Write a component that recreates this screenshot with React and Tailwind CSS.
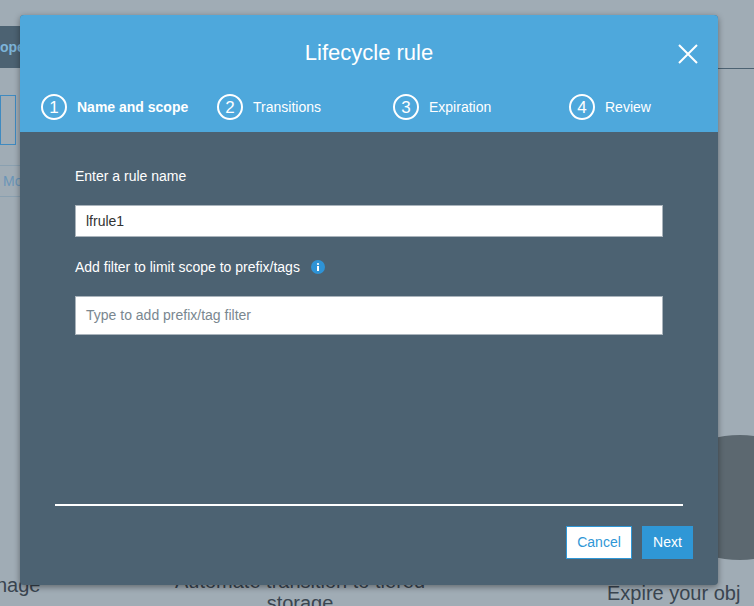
import React from "react";

const F = { fontFamily: '"Liberation Sans", Arial, sans-serif' };

function Step({ n, label, active }) {
  return (
    <div className="flex items-center gap-[10px] w-[176px] shrink-0">
      <div className="w-[26px] h-[26px] shrink-0 rounded-full border-2 border-white flex items-center justify-center text-[17px] text-white leading-none">{n}</div>
      <span className={"text-[14px] text-white whitespace-nowrap " + (active ? "font-bold" : "")}>{label}</span>
    </div>
  );
}

export default function App() {
  return (
    <div className="relative w-[754px] h-[606px] overflow-hidden bg-[#a0acb5]" style={F}>
      {/* background page fragments */}
      <div className="absolute left-0 top-[26px] w-[30px] h-[42px] bg-[#4c6272] text-[#7db4d8] font-bold text-[14px] flex items-center">ope</div>
      <div className="absolute left-[718px] top-[68px] w-[36px] h-px bg-[#4c6272]"></div>
      <div className="absolute left-0 top-[95px] w-[16px] h-[50px] border border-[#3f8ac0]"></div>
      <div className="absolute left-0 top-[165px] w-[30px] h-[32px] border-y border-[#8aa0b0] text-[#6a95b8] text-[14px] flex items-center pl-[3px]">Mo</div>
      <div className="absolute left-[700px] top-[435px] w-[80px] h-[125px] bg-[#5c6870] rounded-[40px/14px]"></div>
      <div className="absolute left-[-4px] top-[570px] text-[20px] text-[#3a4550]">nage</div>
      <div className="absolute left-[160px] top-[570px] w-[280px] text-center text-[20px] leading-[22px] text-[#3a4550]">Automate transition to tiered storage</div>
      <div className="absolute left-[607px] top-[578px] text-[20px] text-[#3a4550] whitespace-nowrap">Expire your obj</div>

      {/* modal */}
      <div className="absolute left-[20px] top-[15px] w-[698px] h-[570px] rounded-[4px] overflow-hidden shadow-[0_2px_6px_rgba(0,0,0,0.4)] bg-[#4c6272] flex flex-col">
        <div className="bg-[#4ea8dc] h-[117px] flex flex-col">
          <div className="relative h-[79px] flex items-center justify-center">
            <span className="text-white text-[22px] mt-[-4px]">Lifecycle rule</span>
            <svg className="absolute right-[20px] top-[29px]" width="20" height="20" viewBox="0 0 20 20">
              <path d="M1 1L19 19M19 1L1 19" stroke="white" strokeWidth="2" />
            </svg>
          </div>
          <div className="flex pl-[21px]">
            <Step n="1" label="Name and scope" active />
            <Step n="2" label="Transitions" />
            <Step n="3" label="Expiration" />
            <Step n="4" label="Review" />
          </div>
        </div>
        <div className="flex-1 flex flex-col px-[35px]">
          <div className="px-[20px] pt-[36px] flex flex-col">
            <div className="text-white text-[14px] leading-[16px]">Enter a rule name</div>
            <div className="mt-[21px] h-[32px] bg-white border border-[#aab4bc] flex items-center px-[10px] text-[14px] text-[#333]">lfrule1</div>
            <div className="mt-[22px] flex items-center gap-[11px]">
              <span className="text-white text-[14px] leading-[16px]">Add filter to limit scope to prefix/tags</span>
              <svg width="14" height="14" viewBox="0 0 14 14">
                <circle cx="7" cy="7" r="7" fill="#2e93d6" />
                <rect x="6" y="6" width="2" height="5" fill="white" />
                <circle cx="7" cy="4" r="1.1" fill="white" />
              </svg>
            </div>
            <div className="mt-[21px] h-[39px] bg-white border border-[#aab4bc] flex items-center px-[10px] text-[14px] text-[#7a8790]">Type to add prefix/tag filter</div>
          </div>
          <div className="mt-[169px] h-[2px] bg-white"></div>
          <div className="mt-[20px] flex justify-end gap-[10px] mr-[-10px]">
            <div className="h-[33px] w-[66px] bg-white border border-[#2f97d6] text-[#2f97d6] text-[14px] flex items-center justify-center">Cancel</div>
            <div className="h-[33px] w-[51px] bg-[#2f97d6] text-white text-[14px] flex items-center justify-center">Next</div>
          </div>
        </div>
      </div>
    </div>
  );
}
